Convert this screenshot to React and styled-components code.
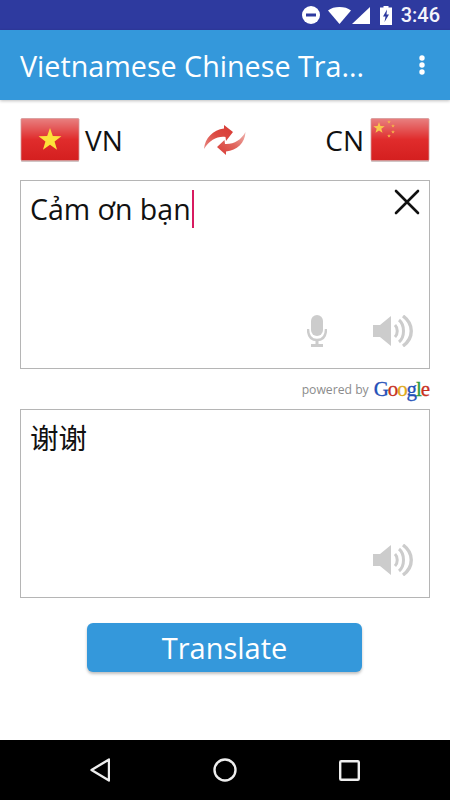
import { createGlobalStyle, styled } from 'styled-components';

const GlobalStyle = createGlobalStyle`
  html, body {
    margin: 0;
    padding: 0;
    background: #fff;
  }
  * {
    box-sizing: border-box;
  }
`;

const Screen = styled.div`
  width: 450px;
  height: 800px;
  display: flex;
  flex-direction: column;
  overflow: hidden;
  font-family: 'Open Sans', 'Noto Sans CJK SC', sans-serif;
  color: #111;
`;

const StatusBar = styled.div`
  height: 30px;
  flex: none;
  background: #2e3a9f;
  display: flex;
  align-items: center;
  justify-content: flex-end;
  padding-right: 10px;
`;

const StatusIcon = styled.span`
  display: flex;
  margin-left: ${(p) => p.$gap}px;
`;

const Clock = styled.span`
  font-family: Roboto, sans-serif;
  font-size: 20px;
  font-weight: 500;
  color: #f4f4fb;
  margin-left: 9px;
`;

const AppBar = styled.header`
  height: 70px;
  flex: none;
  background: #3498db;
  display: flex;
  align-items: center;
  justify-content: space-between;
  padding: 0 25px 0 20px;
  box-shadow: 0 1px 3px rgba(0, 0, 0, 0.25);
  position: relative;
`;

const Title = styled.h1`
  margin: 0;
  font-size: 28.700px;
  font-weight: 400;
  color: #fff;
  white-space: nowrap;
`;

const Content = styled.main`
  flex: 1;
  display: flex;
  flex-direction: column;
  padding: 18px 20px 0;
`;

const LangRow = styled.div`
  display: flex;
  align-items: center;
  justify-content: space-between;
  height: 44px;
  margin-bottom: 18px;
`;

const Lang = styled.div`
  display: flex;
  align-items: center;
  gap: ${(p) => (p.$end ? 6 : 5)}px;
  width: 130px;
  justify-content: ${(p) => (p.$end ? 'flex-end' : 'flex-start')};
`;

const LangCode = styled.span`
  font-size: 28px;
  line-height: 44px;
`;

const Swap = styled.div`
  display: flex;
`;

const TextBox = styled.div`
  height: 189px;
  flex: none;
  border: 1px solid #b5b5b5;
  position: relative;
  padding: 9px;
  font-size: 28.500px;
  line-height: 38px;
  color: #111;
`;

const Caret = styled.span`
  display: inline-block;
  width: 2px;
  height: 38px;
  margin-left: 1px;
  background: #d81b60;
  vertical-align: top;
`;

const ClearButton = styled.div`
  position: absolute;
  top: 7px;
  right: 8px;
  display: flex;
`;

const BoxActions = styled.div`
  position: absolute;
  right: 16px;
  bottom: 21px;
  display: flex;
  align-items: center;
  gap: 46px;
`;

const PoweredRow = styled.div`
  height: 40px;
  flex: none;
  display: flex;
  align-items: center;
  justify-content: flex-end;
  gap: 5px;
  padding-right: 1px;
`;

const PoweredText = styled.span`
  font-size: 12.200px;
  color: #8c8c8c;
`;

const GoogleWord = styled.span`
  font-family: 'Liberation Serif', serif;
  font-size: 21px;
  font-weight: 400;
  letter-spacing: -1.100px;
  -webkit-text-stroke: 0.300px currentColor;
`;

const GoogleLetter = styled.span`
  color: ${(p) => p.$color};
`;

const TranslateButton = styled.button`
  width: 275px;
  height: 49px;
  margin: 25px 0 0 67px;
  flex: none;
  border: none;
  border-radius: 6px;
  background: #3498db;
  color: #fff;
  font-family: 'Open Sans', sans-serif;
  font-size: 29px;
  box-shadow: 0 2px 3px rgba(0, 0, 0, 0.25);
`;

const NavBar = styled.nav`
  height: 60px;
  flex: none;
  background: #000;
  display: flex;
  align-items: center;
  justify-content: space-between;
  padding: 0 90px;
`;

const DndIcon = () => (
  <svg width="18" height="18" viewBox="0 0 18 18">
    <circle cx="9" cy="9" r="9" fill="#fff" />
    <rect x="4" y="7.500" width="10" height="3" fill="#2e3a9f" />
  </svg>
);

const WifiIcon = () => (
  <svg width="23" height="17" viewBox="0 0 23 17">
    <path d="M0 3.500C3 1 7 0 11.500 0S20 1 23 3.500L11.500 17z" fill="#fff" />
  </svg>
);

const SignalIcon = () => (
  <svg width="18" height="17" viewBox="0 0 18 17">
    <path d="M18 0v17H0z" fill="#fff" />
  </svg>
);

const BatteryIcon = () => (
  <svg width="12" height="19" viewBox="0 0 12 19">
    <path d="M3.500 0h5v1.500H12V19H0V1.500h3.500z" fill="#fff" />
    <path d="M7 3.500L3 10.500h2.500L4.500 16 9 8.500H6.500z" fill="#2e3a9f" />
  </svg>
);

const MoreIcon = () => (
  <svg width="6" height="20" viewBox="0 0 6 20">
    <circle cx="3" cy="3" r="2.700" fill="#fff" />
    <circle cx="3" cy="10" r="2.700" fill="#fff" />
    <circle cx="3" cy="17" r="2.700" fill="#fff" />
  </svg>
);

const Star = ({ cx, cy, r, fill }) => {
  const pts = [];
  for (let i = 0; i < 10; i++) {
    const rad = i % 2 === 0 ? r : r * 0.4;
    const a = (Math.PI / 5) * i - Math.PI / 2;
    pts.push(`${cx + rad * Math.cos(a)},${cy + rad * Math.sin(a)}`);
  }
  return <polygon points={pts.join(' ')} fill={fill} />;
};

const FlagIcon = ({ id, children }) => (
  <svg width="60" height="44" viewBox="0 0 60 44">
    <defs>
      <linearGradient id={id} x1="0" y1="0" x2="0" y2="1">
        <stop offset="0" stopColor="#e88080" />
        <stop offset="0.5" stopColor="#e02c2c" />
        <stop offset="1" stopColor="#d41f1f" />
      </linearGradient>
    </defs>
    <rect x="1" y="42" width="58" height="2" rx="1" fill="#d0c4c4" />
    <rect x="1" y="0.500" width="58" height="42" rx="1" fill={`url(#${id})`} stroke="#d49a9a" strokeWidth="0.800" />
    {children}
  </svg>
);

const SwapIcon = () => (
  <svg width="42" height="30" viewBox="0 0 42 30">
    <defs>
      <linearGradient id="swapTop" x1="0" y1="1" x2="1" y2="0">
        <stop offset="0" stopColor="#e88a84" />
        <stop offset="0.5" stopColor="#dc4a42" />
        <stop offset="1" stopColor="#d83a34" />
      </linearGradient>
      <linearGradient id="swapBottom" x1="1" y1="0" x2="0" y2="1">
        <stop offset="0" stopColor="#efb5b0" />
        <stop offset="0.5" stopColor="#e0645c" />
        <stop offset="1" stopColor="#d83a34" />
      </linearGradient>
    </defs>
    <path
      d="M0 24C1 13 9 5 20 3.500L20 0 29 7 22 16 21.500 12C13 11 6 15 0 24z"
      fill="url(#swapTop)"
    />
    <path
      d="M41.500 7C41 18 33 25.500 22 26.500L22 30 13 22 20.500 15 21 19C30 19.500 37 15 41.500 7z"
      fill="url(#swapBottom)"
    />
  </svg>
);

const CloseIcon = () => (
  <svg width="28" height="28" viewBox="0 0 28 28">
    <path d="M3 3l22 22M25 3L3 25" stroke="#111" strokeWidth="2.600" strokeLinecap="round" fill="none" />
  </svg>
);

const MicIcon = () => (
  <svg width="20" height="32" viewBox="0 0 20 32">
    <rect x="4" y="0" width="12" height="21" rx="6" fill="#ccc" />
    <path d="M1 14c0 7 3 11 9 11s9-4 9-11" stroke="#ccc" strokeWidth="2.400" fill="none" />
    <path d="M10 25v5M4 30.500h12" stroke="#ccc" strokeWidth="3" fill="none" />
  </svg>
);

const SpeakerIcon = () => (
  <svg width="40" height="32" viewBox="0 0 40 32">
    <path d="M0 10h7L18 1v30L7 22H0z" fill="#ccc" />
    <g stroke="#ccc" fill="none">
      <path d="M22 10c3 3 3 9 0 12" strokeWidth="3" />
      <path d="M26 5c6 5 6 17 0 22" strokeWidth="3" />
      <path d="M30 1c11 8 11 22 0 30" strokeWidth="3.400" />
    </g>
  </svg>
);

const BackIcon = () => (
  <svg width="20" height="24" viewBox="0 0 20 24">
    <path d="M1.500 12L19 1.500v21z" stroke="#eee" strokeWidth="2.400" strokeLinejoin="round" fill="none" />
  </svg>
);

const HomeIcon = () => (
  <svg width="24" height="24" viewBox="0 0 24 24">
    <circle cx="12" cy="12" r="10.500" stroke="#eee" strokeWidth="2.400" fill="none" />
  </svg>
);

const RecentsIcon = () => (
  <svg width="21" height="21" viewBox="0 0 21 21">
    <rect x="1.200" y="1.200" width="18.600" height="18.600" rx="1" stroke="#eee" strokeWidth="2.400" fill="none" />
  </svg>
);

export default function App() {
  return (
    <>
      <GlobalStyle />
      <Screen>
        <StatusBar>
          <DndIcon />
          <StatusIcon $gap={8}>
            <WifiIcon />
          </StatusIcon>
          <StatusIcon $gap={1}>
            <SignalIcon />
          </StatusIcon>
          <StatusIcon $gap={10}>
            <BatteryIcon />
          </StatusIcon>
          <Clock>3:46</Clock>
        </StatusBar>
        <AppBar>
          <Title>Vietnamese Chinese Tra...</Title>
          <MoreIcon />
        </AppBar>
        <Content>
          <LangRow>
            <Lang>
              <FlagIcon id="vn">
                <Star cx={30} cy={22} r={12} fill="#fde23a" />
              </FlagIcon>
              <LangCode>VN</LangCode>
            </Lang>
            <Swap>
              <SwapIcon />
            </Swap>
            <Lang $end>
              <LangCode>CN</LangCode>
              <FlagIcon id="cn">
                <Star cx={9} cy={10} r={6} fill="#f8c84a" />
                <Star cx={19} cy={4} r={2} fill="#f5b04a" />
                <Star cx={23} cy={8} r={2} fill="#f5b04a" />
                <Star cx={23} cy={14} r={2} fill="#f5b04a" />
                <Star cx={19} cy={18} r={2} fill="#f5b04a" />
              </FlagIcon>
            </Lang>
          </LangRow>
          <TextBox>
            Cảm ơn bạn
            <Caret />
            <ClearButton>
              <CloseIcon />
            </ClearButton>
            <BoxActions>
              <MicIcon />
              <SpeakerIcon />
            </BoxActions>
          </TextBox>
          <PoweredRow>
            <PoweredText>powered by</PoweredText>
            <GoogleWord>
              <GoogleLetter $color="#2350b8">G</GoogleLetter>
              <GoogleLetter $color="#c8321f">o</GoogleLetter>
              <GoogleLetter $color="#e0a91c">o</GoogleLetter>
              <GoogleLetter $color="#2350b8">g</GoogleLetter>
              <GoogleLetter $color="#2f9a3b">l</GoogleLetter>
              <GoogleLetter $color="#c8321f">e</GoogleLetter>
            </GoogleWord>
          </PoweredRow>
          <TextBox lang="zh-CN">
            谢谢
            <BoxActions>
              <SpeakerIcon />
            </BoxActions>
          </TextBox>
          <TranslateButton>Translate</TranslateButton>
        </Content>
        <NavBar>
          <BackIcon />
          <HomeIcon />
          <RecentsIcon />
        </NavBar>
      </Screen>
    </>
  );
}
